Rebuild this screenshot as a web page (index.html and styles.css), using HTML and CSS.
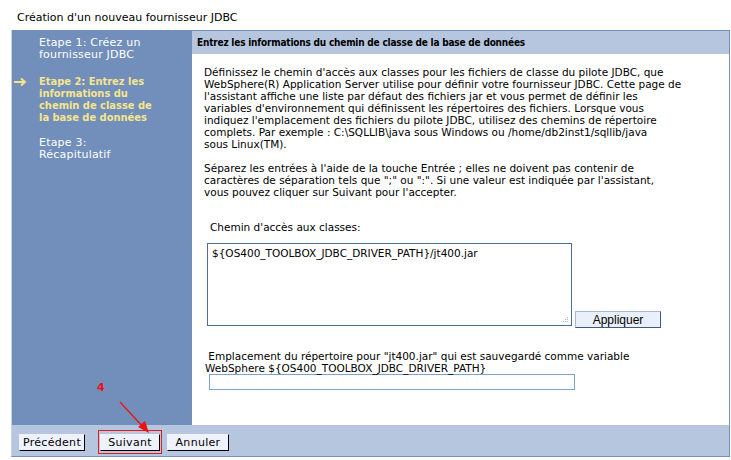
FILE: index.html
```html
<!DOCTYPE html>
<html lang="fr">
<head>
<meta charset="utf-8">
<title>Création d'un nouveau fournisseur JDBC</title>
<link rel="stylesheet" href="styles.css">
</head>
<body>
<div class="page-title">Création d'un nouveau fournisseur JDBC</div>
<div class="wizard">
  <div class="main">
    <nav class="steps">
      <div class="step">Etape 1: Créez un fournisseur JDBC</div>
      <div class="step current">
        <svg class="arrow" width="14" height="10" viewBox="0 0 14 10"><path d="M1 5H12M8 1.5L12 5L8 8.5" fill="none" stroke="#f3e38a" stroke-width="2"/></svg>
        Etape 2: Entrez les informations du chemin de classe de la base de données
      </div>
      <div class="step">Etape 3: Récapitulatif</div>
    </nav>
    <section class="content">
      <div class="content-head">Entrez les informations du chemin de classe de la base de données</div>
      <div class="content-body">
        <p>Définissez le chemin d'accès aux classes pour les fichiers de classe du pilote JDBC, que<br>WebSphere(R) Application Server utilise pour définir votre fournisseur JDBC. Cette page de<br>l'assistant affiche une liste par défaut des fichiers jar et vous permet de définir les<br>variables d'environnement qui définissent les répertoires des fichiers. Lorsque vous<br>indiquez l'emplacement des fichiers du pilote JDBC, utilisez des chemins de répertoire<br>complets. Par exemple : C:\SQLLIB\java sous Windows ou /home/db2inst1/sqllib/java<br>sous Linux(TM).</p>
        <p>Séparez les entrées à l'aide de la touche Entrée ; elles ne doivent pas contenir de<br>caractères de séparation tels que ";" ou ":". Si une valeur est indiquée par l'assistant,<br>vous pouvez cliquer sur Suivant pour l'accepter.</p>
        <div class="field-label">Chemin d'accès aux classes:</div>
        <div class="classpath-row">
          <div class="classpath-box">
            <textarea class="classpath" readonly>${OS400_TOOLBOX_JDBC_DRIVER_PATH}/jt400.jar</textarea>
            <svg class="grip" width="6" height="6" viewBox="0 0 6 6"><g fill="#b5b5b5"><rect x="4" y="0" width="1" height="1"/><rect x="2" y="2" width="1" height="1"/><rect x="4" y="2" width="1" height="1"/><rect x="0" y="4" width="1" height="1"/><rect x="2" y="4" width="1" height="1"/><rect x="4" y="4" width="1" height="1"/></g></svg>
          </div>
          <button class="apply">Appliquer</button>
        </div>
        <div class="var-label">&nbsp;Emplacement du répertoire pour "jt400.jar" qui est sauvegardé comme variable WebSphere ${OS400_TOOLBOX_JDBC_DRIVER_PATH}</div>
        <input class="var-input" type="text">
      </div>
    </section>
  </div>
  <div class="footer">
    <button class="btn btn-prev">Précédent</button>
    <span class="highlight"><button class="btn btn-next">Suivant</button></span>
    <button class="btn btn-cancel">Annuler</button>
  </div>
  <div class="annot">
    <span class="annot-num">4</span>
    <svg class="annot-arrow" width="40" height="40" viewBox="0 0 40 40"><path d="M3 2L27 28" stroke="#ee1111" stroke-width="1.3" fill="none"/><path d="M32 33L21 27L28 21Z" fill="#ee1111"/></svg>
  </div>
</div>
</body>
</html>
```
FILE: styles.css
```css
html, body {
  margin: 0;
  padding: 0;
  background: #ffffff;
}
body {
  font-family: "DejaVu Sans", Verdana, sans-serif;
  font-size: 10.5px;
  color: #000;
  width: 731px;
  height: 460px;
  overflow: hidden;
}
.page-title {
  font-size: 11px;
  padding: 11px 0 0 17px;
  height: 19px;
  line-height: 14px;
}
.wizard {
  position: relative;
  margin-left: 11px;
  width: 717px;
  border: 1px solid #7591bb;
  border-left-color: #c9d2de;
  border-top: none;
}
.main {
  display: flex;
  height: 395px;
}
.steps {
  width: 180px;
  background: #718fba;
  color: #ffffff;
  font-size: 11px;
  line-height: 12px;
  padding: 7px 37px 0 27px;
  box-sizing: border-box;
  display: flex;
  flex-direction: column;
  gap: 14px;
  letter-spacing: 0.2px;
}
.step {
  position: relative;
}
.step.current {
  color: #f6e58c;
  font-weight: bold;
  font-family: "DejaVu Sans Condensed", "DejaVu Sans", sans-serif;
  letter-spacing: 0;
  margin-top: 1px;
  margin-bottom: -1px;
}
.arrow {
  position: absolute;
  left: -26px;
  top: 1px;
}
.content {
  flex: 1;
  display: flex;
  flex-direction: column;
  background: #fff;
  border-top: 1px solid #7591bb;
}
.content-head {
  background: #b6c6df;
  height: 23px;
  line-height: 23px;
  padding-left: 5px;
  font-weight: bold;
  font-family: "DejaVu Sans Condensed", "DejaVu Sans", sans-serif;
  font-size: 10px;
  letter-spacing: -0.2px;
}
.content-body {
  padding: 12px 12px 0 12px;
  line-height: 12px;
  white-space: nowrap;
}
.content-body p {
  margin: 0 0 12px 0;
}
.field-label {
  margin: 23px 0 0 6px;
}
.classpath-row {
  display: flex;
  align-items: flex-end;
  margin: 10px 0 0 3px;
}
.classpath-box {
  position: relative;
  display: flex;
}
.classpath {
  width: 365px;
  height: 83px;
  box-sizing: border-box;
  border: 1px solid #4f6e94;
  font-family: "DejaVu Sans", Verdana, sans-serif;
  font-size: 10.5px;
  padding: 3px 4px;
  margin: 0;
  resize: none;
  outline: none;
}
.grip {
  position: absolute;
  right: 3px;
  bottom: 3px;
}
.apply {
  margin-left: 3px;
  margin-bottom: -2px;
  width: 86px;
  height: 17px;
  padding: 0;
  font-family: "Liberation Sans", Arial, sans-serif;
  font-size: 12px;
  background: #eaf0fb;
  border: 1px solid;
  border-color: #a9b9d4 #42597a #42597a #a9b9d4;
}
.var-label {
  margin: 24px 0 0 1px;
  width: 430px;
  white-space: normal;
}
.var-input {
  display: block;
  margin: 0 0 0 5px;
  width: 366px;
  height: 16px;
  box-sizing: border-box;
  border: 1px solid #7da2cc;
  padding: 0;
}
.footer {
  background: #b6c6df;
  height: 31px;
  display: flex;
  align-items: center;
  padding-left: 7px;
  box-sizing: border-box;
  padding-top: 3px;
}
.btn {
  height: 17px;
  padding: 0;
  font-family: "DejaVu Sans", Verdana, sans-serif;
  font-size: 11px;
  background: #eef2fc;
  border: 1px solid;
  border-color: #eef2fc #000 #000 #eef2fc;
  letter-spacing: 0.3px;
  text-align: center;
}
.btn-prev {
  width: 66px;
}
.btn-next {
  width: 60px;
}
.btn-cancel {
  width: 62px;
  margin-left: 5px;
}
.highlight {
  display: inline-flex;
  border: 1px solid #e41b1b;
  padding: 3px 1px 2px 1px;
  margin-left: 13px;
}
.annot {
  position: absolute;
  left: 85px;
  top: 350px;
}
.annot-num {
  position: absolute;
  left: 0;
  top: 1px;
  color: #ee1111;
  font-weight: bold;
  font-size: 11px;
}
.annot-arrow {
  position: absolute;
  left: 20px;
  top: 20px;
}
```
